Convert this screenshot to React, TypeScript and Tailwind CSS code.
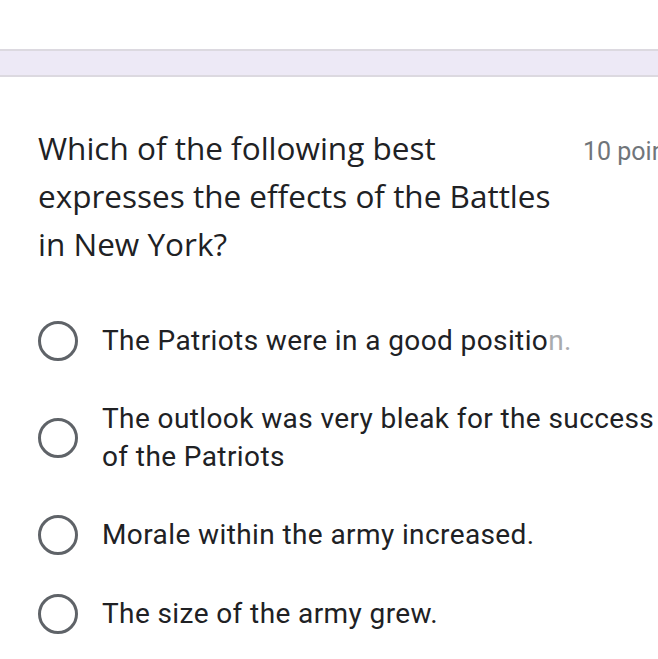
import React from 'react';

interface Option {
  id: number;
  text: React.ReactNode;
}

const options: Option[] = [
  {
    id: 1,
    text: (
      <>
        The Patriots were in a good positio<span className="text-[#a9abae]">n.</span>
      </>
    ),
  },
  { id: 2, text: 'The outlook was very bleak for the success of the Patriots' },
  { id: 3, text: 'Morale within the army increased.' },
  { id: 4, text: 'The size of the army grew.' },
];

const Radio: React.FC = () => (
  <div className="w-[40px] h-[40px] shrink-0 rounded-full border-[3.5px] border-[#5f6368]" />
);

const App: React.FC = () => {
  return (
    <div className="w-[658px] h-[659px] bg-white overflow-hidden">
      {/* Header band */}
      <div className="h-[49px]" />
      <div className="h-[28px] bg-[#ede9f6] border-y-2 border-[#dcd9e0]" />

      {/* Question card */}
      <div className="pl-[38px] pt-[47px]">
        <div className="flex items-start">
          <h1 className="w-[525px] shrink-0 text-[31.5px] font-normal leading-[48px] text-[#202124] font-['Open_Sans',sans-serif]">
            Which of the following best expresses the effects of the Battles in New York?
          </h1>
          <span className="ml-[20px] mt-[4px] whitespace-nowrap text-[25px] leading-[48px] text-[#70757a] font-['Roboto',sans-serif]">
            10 points
          </span>
        </div>

        {/* Options */}
        <div className="mt-[53px] flex flex-col gap-[39px] font-['Roboto',sans-serif]">
          {options.map((o) => (
            <div key={o.id} className="flex items-center gap-[24px]">
              <Radio />
              <p className="w-[560px] text-[28px] tracking-[0.4px] leading-[38px] text-[#202124]">{o.text}</p>
            </div>
          ))}
        </div>
      </div>
    </div>
  );
};

export default App;
